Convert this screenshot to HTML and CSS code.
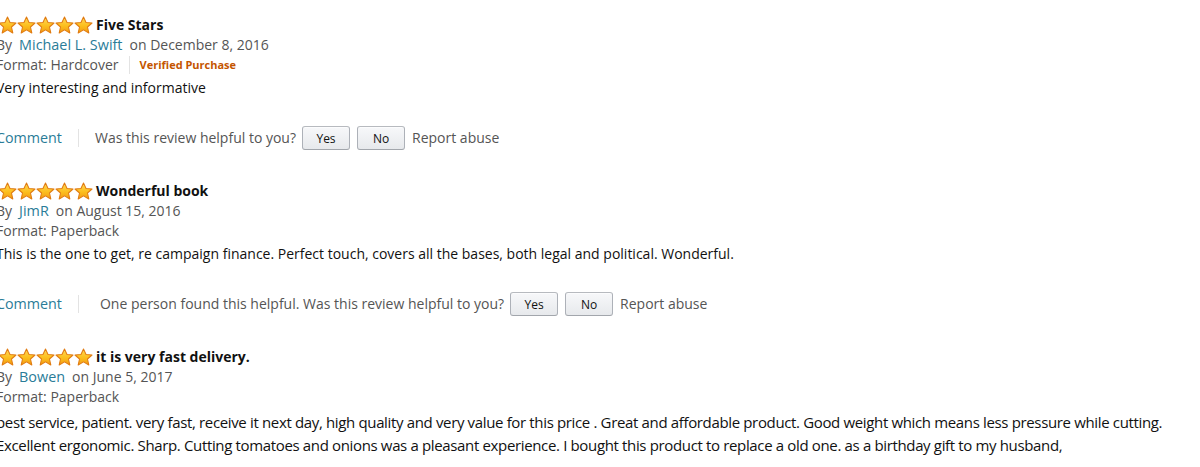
FILE: index.html
```html
<!DOCTYPE html>
<html lang="en">
<head>
<meta charset="utf-8">
<title>Reviews</title>
<link rel="stylesheet" href="styles.css">
</head>
<body>
<svg width="0" height="0" class="defs" aria-hidden="true">
  <defs>
    <linearGradient id="sg" x1="0" y1="0" x2="0" y2="1">
      <stop offset="0" stop-color="#ffd95a"/>
      <stop offset="0.55" stop-color="#fcbf1e"/>
      <stop offset="1" stop-color="#f29b12"/>
    </linearGradient>
    <symbol id="star" viewBox="0 0 20 19">
      <path d="M10 1 L12.7 6.8 L19 7.4 L14.2 11.6 L15.6 17.9 L10 14.6 L4.4 17.9 L5.8 11.6 L1 7.4 L7.3 6.8 Z" fill="url(#sg)" stroke="#e07b12" stroke-width="1.1" stroke-linejoin="round"/>
    </symbol>
  </defs>
</svg>
<div class="page">
  <div class="review">
    <div class="head">
      <span class="stars"><svg><use href="#star"/></svg><svg><use href="#star"/></svg><svg><use href="#star"/></svg><svg><use href="#star"/></svg><svg><use href="#star"/></svg></span>
      <span class="title">Five Stars</span>
    </div>
    <div class="meta">By<a class="link">Michael L. Swift</a>on December 8, 2016</div>
    <div class="meta">Format: Hardcover<span class="sep"></span><span class="verified">Verified Purchase</span></div>
    <div class="body">Very interesting and informative</div>
    <div class="actions">
      <a class="link">Comment</a><span class="sep big"></span>
      <span class="q">Was this review helpful to you?</span>
      <button class="btn">Yes</button><button class="btn">No</button>
      <span class="q">Report abuse</span>
    </div>
  </div>
  <div class="review">
    <div class="head">
      <span class="stars"><svg><use href="#star"/></svg><svg><use href="#star"/></svg><svg><use href="#star"/></svg><svg><use href="#star"/></svg><svg><use href="#star"/></svg></span>
      <span class="title">Wonderful book</span>
    </div>
    <div class="meta">By<a class="link">JimR</a>on August 15, 2016</div>
    <div class="meta">Format: Paperback</div>
    <div class="body">This is the one to get, re campaign finance. Perfect touch, covers all the bases, both legal and political. Wonderful.</div>
    <div class="actions">
      <a class="link">Comment</a><span class="sep big wide"></span>
      <span class="q">One person found this helpful. Was this review helpful to you?</span>
      <button class="btn">Yes</button><button class="btn">No</button>
      <span class="q">Report abuse</span>
    </div>
  </div>
  <div class="review">
    <div class="head">
      <span class="stars"><svg><use href="#star"/></svg><svg><use href="#star"/></svg><svg><use href="#star"/></svg><svg><use href="#star"/></svg><svg><use href="#star"/></svg></span>
      <span class="title">it is very fast delivery.</span>
    </div>
    <div class="meta">By<a class="link">Bowen</a>on June 5, 2017</div>
    <div class="meta">Format: Paperback</div>
    <div class="body narrow">best service, patient. very fast, receive it next day, high quality and very value for this price . Great and affordable product. Good weight which means less pressure while cutting. Excellent ergonomic. Sharp. Cutting tomatoes and onions was a pleasant experience. I bought this product to replace a old one. as a birthday gift to my husband,</div>
  </div>
</div>
</body>
</html>
```

FILE: styles.css
```css
html, body {
  margin: 0;
  padding: 0;
  background: #fff;
  overflow: hidden;
}
.defs {
  position: absolute;
  width: 0;
  height: 0;
}
.page {
  margin-left: -4px;
  padding-top: 15px;
  font-family: "Open Sans", "Noto Sans", Arial, sans-serif;
  font-size: 14px;
  line-height: 20px;
  color: #111;
}
.review {
  display: flex;
  flex-direction: column;
  margin-bottom: 31px;
}
.head {
  display: flex;
  align-items: center;
  height: 20px;
}
.stars {
  display: flex;
  gap: 0;
  margin-left: 2px;
  margin-right: 3px;
}
.stars svg {
  width: 19px;
  height: 18px;
}
.title {
  font-weight: 700;
  color: #111;
}
.meta {
  color: #555;
  display: flex;
  align-items: center;
  white-space: pre;
}
.meta .link {
  margin: 0 7px 0 7px;
  font-size: 14.4px;
}
.link {
  color: #2a7c98;
}
.sep {
  display: inline-block;
  width: 1px;
  height: 18px;
  background: #e3e3e3;
  margin: 0 10px 0 10px;
}
.verified {
  color: #c45500;
  font-weight: 700;
  font-size: 11px;
}
.body {
  margin-top: 3px;
  color: #111;
}
.body.narrow {
  margin-top: 4px;
  line-height: 23px;
  letter-spacing: -0.35px;
  font-size: 15px;
}
.actions {
  display: flex;
  align-items: center;
  margin-top: 28px;
  height: 24px;
}
.actions > .link {
  font-size: 14.3px;
}
.actions .sep.big {
  margin: 0 16px 0 16px;
}
.actions .sep.big.wide {
  margin-right: 21px;
}
.q {
  color: #555;
}
.btn {
  font-family: inherit;
  font-size: 12px;
  color: #111;
  width: 48px;
  height: 24px;
  padding: 0;
  margin: 0 0 0 6px;
  border: 1px solid #adb1b8;
  border-color: #b7babf #adb1b8 #a2a6ac;
  border-radius: 3px;
  background: linear-gradient(#f7f8fa, #e7e9ec);
  box-shadow: inset 0 1px 0 rgba(255,255,255,0.6);
}
.btn + .btn {
  margin-left: 7px;
}
.btn + .btn + .q {
  margin-left: 7px;
}
```
